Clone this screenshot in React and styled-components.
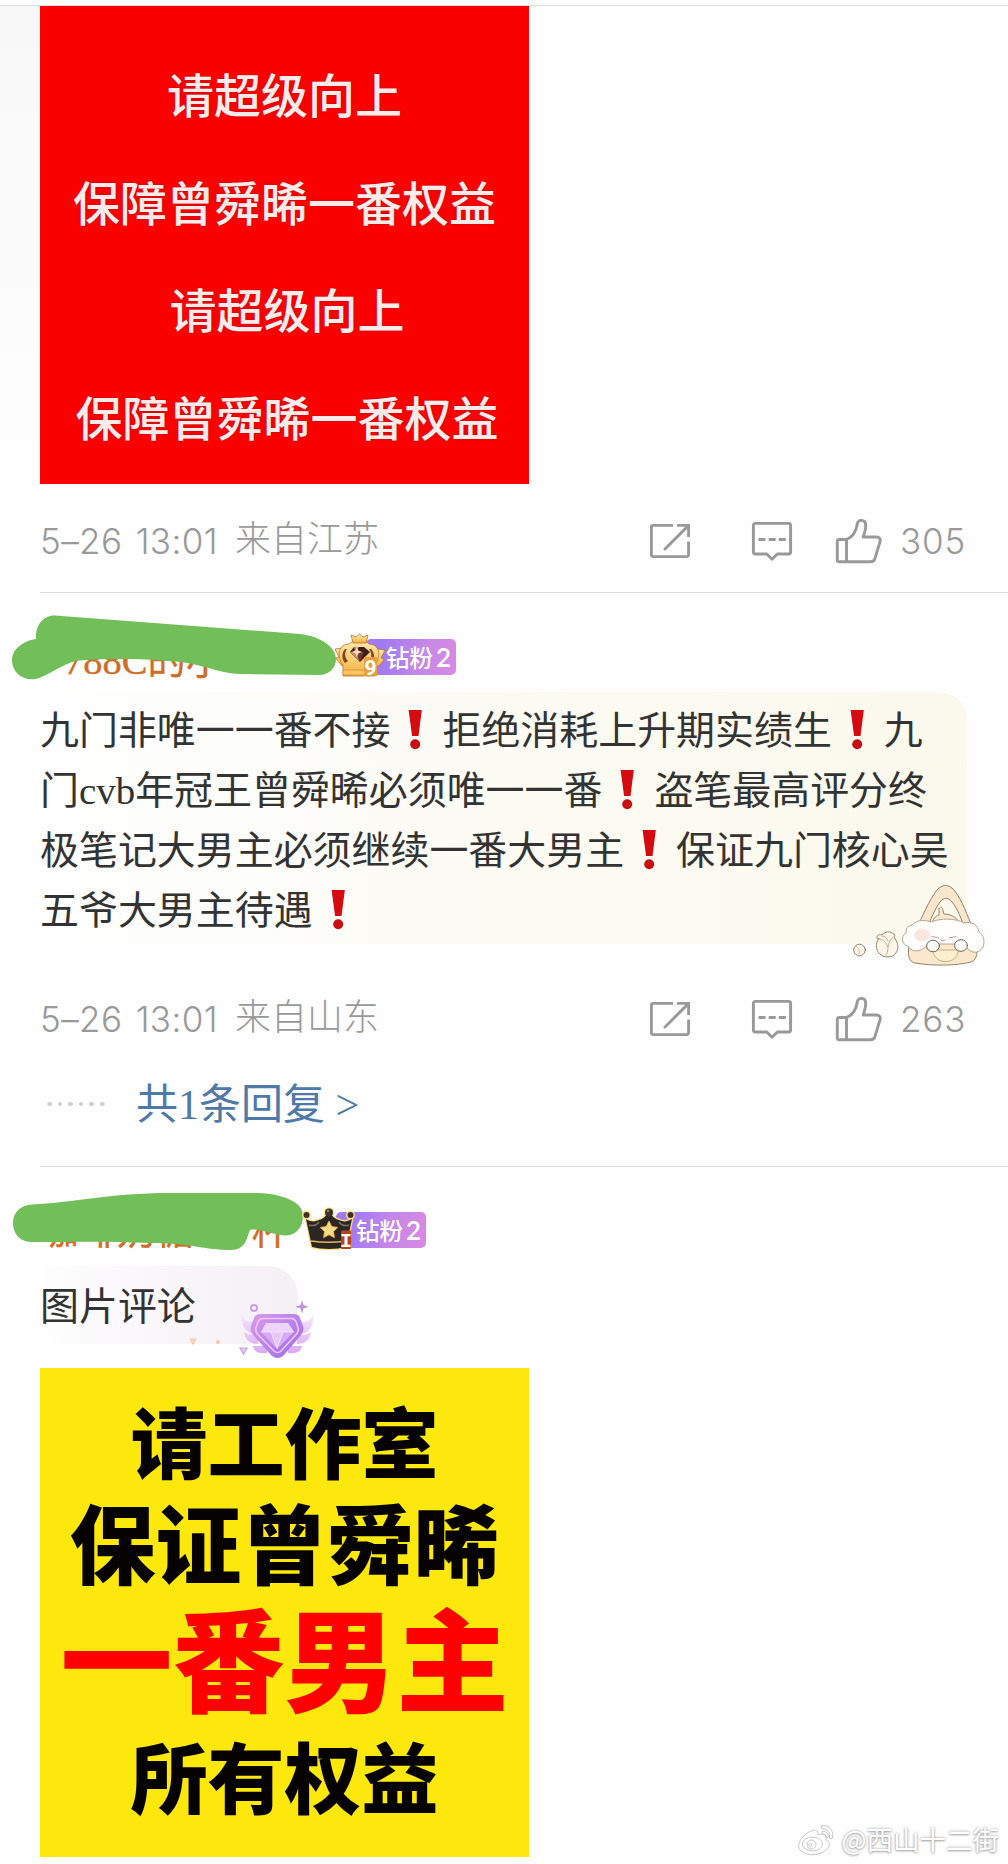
import React from "react";
import styled, { createGlobalStyle } from "styled-components";

const GlobalStyle = createGlobalStyle`
    *{
        box-sizing: border-box;
    }
    body{
        margin: 0;
        background: #fefefe;
        font-family: "Liberation Serif", "Noto Sans CJK SC", sans-serif;
        color: #333;
    }
    svg{
        display: block;
        flex: none;
    }
`

const PageStyled = styled.div`
    position: relative;
    width: 1008px;
    height: 1864px;
    overflow: hidden;
    background: linear-gradient(180deg, #f8f8f8 0, #fefefe 480px) 0 6px / 40px 480px no-repeat, #fefefe;
`

const TopEdge = styled.div`
    height: 6px;
    background: #fdfdfd;
    border-bottom: 1px solid #dedede;
`

const Comment = styled.div`
    display: flex;
    flex-direction: column;
    align-items: flex-start;
    margin-left: 40px;
    padding-top: ${(p) => p.$top || 0}px;
    padding-bottom: ${(p) => p.$bottom || 0}px;
    border-bottom: ${(p) => (p.$last ? "none" : "1px solid #dcdcdc")};
`

const RedPoster = styled.div`
    width: 489px;
    height: 478px;
    padding-top: 33px;
    background: #fb0000;
    color: #ffeaea;
    font-family: "Noto Sans CJK SC", sans-serif;
    font-weight: 500;
    font-size: 47px;
    line-height: 107.5px;
    text-align: center;
    p{
        margin: 0;
        text-shadow: 0 0 2px #8d2020;
    }
    p:nth-child(n + 3){
        padding-left: 5px;
    }
`

const YellowPoster = styled.div`
    width: 489px;
    height: 489px;
    margin-top: 24px;
    padding-top: 20px;
    background: #fce80c;
    font-family: "Noto Sans CJK SC", sans-serif;
    font-weight: 900;
`

const PosterLine = styled.p`
    margin: 0;
    height: ${(p) => p.$height}px;
    line-height: ${(p) => p.$height}px;
    font-size: ${(p) => p.$size}px;
    color: ${(p) => p.$color || "#050200"};
    text-align: center;
    white-space: nowrap;
`

const MetaStyled = styled.div`
    display: flex;
    align-items: center;
    width: 100%;
    height: 60px;
    margin-top: ${(p) => p.$top}px;
    padding-right: 42px;
    color: #999;
    .date{
        width: 195px;
        font-family: "Inter", sans-serif;
        font-weight: 300;
        font-size: 35px;
        letter-spacing: 0.4px;
        word-spacing: 3px;
        white-space: nowrap;
    }
    .place{
        flex: 1;
        font-family: "Noto Sans CJK SC", sans-serif;
        font-weight: 300;
        font-size: 36px;
        line-height: 60px;
        margin-top: -10px;
    }
    .count{
        width: 66px;
        margin-left: 18px;
        font-family: "Inter", sans-serif;
        font-weight: 300;
        font-size: 35px;
        letter-spacing: 0.8px;
        white-space: nowrap;
    }
`

const Actions = styled.div`
    display: flex;
    align-items: center;
    svg + svg{
        margin-left: 60px;
    }
    svg:nth-child(3){
        margin-left: 42px;
    }
`

const NameRow = styled.div`
    position: relative;
    display: flex;
    align-items: center;
    height: 40px;
`

const UserName = styled.div`
    width: ${(p) => p.$width}px;
    height: 40px;
    padding-left: ${(p) => p.$indent || 0}px;
    line-height: ${(p) => p.$line || 50}px;
    font-size: 38.5px;
    color: #cf6c26;
    white-space: nowrap;
    -webkit-text-stroke: 0.4px #cf6c26;
`

/* marker stroke lying over the user name */
const Marker = styled.svg`
    position: absolute;
    left: -40px;
    top: -32px;
`

const Badge = styled.div`
    position: relative;
    display: flex;
    align-items: center;
    justify-content: flex-end;
    width: 90px;
    height: 36px;
    padding-right: 5px;
    border-radius: 5px;
    background: linear-gradient(100deg, #a27af2 20%, #c587e8 60%, #d98ae2);
    color: #fff;
    font-family: "Noto Sans CJK SC", sans-serif;
    font-weight: 500;
    font-size: 23.5px;
    line-height: 34px;
    white-space: nowrap;
    span{
        margin-left: 3px;
        font-family: "Lato", sans-serif;
        font-weight: 600;
        font-size: 26px;
    }
`

const Emblem = styled.div`
    position: absolute;
    left: ${(p) => p.$left}px;
    top: ${(p) => p.$y}px;
`

const Bubble = styled.div`
    position: relative;
    width: ${(p) => p.$width}px;
    height: ${(p) => p.$height}px;
    margin-top: ${(p) => p.$top}px;
    padding-top: ${(p) => p.$pad}px;
    border-radius: ${(p) => p.$radius};
    background: ${(p) => p.$fill};
    font-size: 38.95px;
    line-height: 60px;
    p{
        margin: 0;
        height: 60px;
        white-space: nowrap;
    }
`

const Sticker = styled.div`
    position: absolute;
    left: ${(p) => p.$left}px;
    top: ${(p) => p.$y}px;
`

const MarkSvg = styled.svg`
    && {
        display: inline-block;
        vertical-align: -6px;
    }
`

const ReplyRow = styled.div`
    display: flex;
    align-items: center;
    height: 50px;
    margin-top: 30px;
    font-size: 42px;
    line-height: 50px;
    color: #4f79a8;
    white-space: nowrap;
    span{
        padding-top: 2px;
    }
`

const Dots = styled.div`
    display: flex;
    gap: 6px;
    width: 96px;
    padding-left: 7px;
    i{
        width: 4.6px;
        height: 4.6px;
        border-radius: 50%;
        background: #cfcfcf;
    }
`

const Watermark = styled.div`
    position: absolute;
    right: 9px;
    bottom: 6px;
    display: flex;
    align-items: center;
    gap: 6px;
    height: 38px;
    color: #fff;
    font-family: "Noto Sans CJK SC", sans-serif;
    font-size: 26.5px;
    line-height: 38px;
    text-shadow: 0 0 3px #9c9c9c, 0 1px 2px #b5b5b5;
`

const Mark = () => (
  <MarkSvg width="52" height="40" viewBox="0 0 52 40">
    <path d="M18.6 0h13.200l-3.300 26h-6.400z" fill="#d40b10" />
    <circle cx="25.2" cy="34.2" r="5" fill="#c90f14" />
  </MarkSvg>
)

const ShareIcon = () => (
  <svg width="42" height="36" viewBox="0 0 42 36" fill="none" stroke="#999" strokeWidth="2.9" strokeLinecap="butt">
    <path d="M24 2.4H4.2a1.8 1.8 0 0 0-1.8 1.8v27.6a1.8 1.8 0 0 0 1.8 1.8h33.6a1.8 1.8 0 0 0 1.8-1.8V18.5" />
    <path d="M28 2.4h11.6V14" />
    <path d="M38.6 3.4L16 26" strokeLinecap="round" />
  </svg>
)

const CommentIcon = () => (
  <svg width="42" height="40" viewBox="0 0 42 40" fill="none" stroke="#999" strokeWidth="2.9" strokeLinejoin="round">
    <path d="M4.4 2.4h33.2a2 2 0 0 1 2 2V31a2 2 0 0 1-2 2H26.4l-5.4 5.2-5.2-5.2H4.4a2 2 0 0 1-2-2V4.4a2 2 0 0 1 2-2z" />
    <path d="M7.5 18.500h7M17.700 18.500h7M27.800 18.500h7" strokeLinecap="butt" />
  </svg>
)

const LikeIcon = () => (
  <svg width="47" height="46" viewBox="0 0 47 46" fill="none" stroke="#999" strokeWidth="2.9" strokeLinejoin="round">
    <path d="M11.5 21.500H4.300a2 2 0 0 0-2 2v18.200a2 2 0 0 0 2 2h31.400c2 0 3.400-.8 4.100-2.800l5.200-17c.8-2.900-.6-4.900-3.400-4.900H28.200c1.600-4.600 2.500-7.800 2.500-11.600 0-3.200-1.900-5-4.400-5-2.400 0-3.800 1.500-4.200 4.300-1 6.800-5 12.500-10.600 14.800z" />
    <path d="M11.500 21.500v22" />
  </svg>
)

const GoldCrown = () => (
  <svg width="52" height="46" viewBox="0 0 52 46">
    <defs>
      <linearGradient id="gold" x1="0" y1="0" x2="0" y2="1">
        <stop offset="0" stopColor="#ffe9b0" />
        <stop offset="0.55" stopColor="#fbcd72" />
        <stop offset="1" stopColor="#f5ae3c" />
      </linearGradient>
    </defs>
    <g stroke="#b5762f" strokeWidth="0.8" strokeLinejoin="round" fill="url(#gold)">
      <path d="M1 16l8-1 3 16-4 2c-2-3-5-5-6-8l3-1z" />
      <path d="M51 17l-8-1-4 15 4 3c3-2 6-5 7-8l-3-1z" />
      <path d="M9 43V32C2 22 5 11 15 11c3-3 6-4 10-4s7 1 10 4c10 0 13 11 6 21v11z" />
      <path d="M17 2l5 2 3.500-3 3.500 3 5-2-2 8h-13z" />
    </g>
    <path d="M11 16c-4 5-3 10 0 14l3-2c-3-3-4-8-1-12zM37 16c4 4 4 10 1 14l-3-2c3-3 3-8 0-12z" fill="#8f4119" />
    <path d="M16 19l4-5h10l6 5-10 10z" fill="#3b1d1a" />
    <path d="M16 19l6 0 4 10zM20 14l5 0-4 5z" fill="#c98062" />
    <path d="M22 19h8l-4 9z" fill="#6d3830" />
    <path d="M23 13.500l1.200 4 4 1.500-4 1.500-1.200 4-1.500-4-4-1.500 4-1.500z" fill="#ffd9b8" />
    <path d="M9 37h26v5H9z" fill="#ffc560" stroke="#d08a30" strokeWidth="0.700" />
    <rect x="30" y="24" width="13" height="19" fill="#e8a03e" />
    <text x="36.500" y="42" textAnchor="middle" fontFamily="Roboto" fontWeight="700" fontSize="21" fill="#fff">9</text>
  </svg>
)

const BlackCrown = () => (
  <svg width="54" height="46" viewBox="0 0 54 46">
    <g stroke="#ffdf7e" strokeWidth="2.600" strokeLinejoin="round" fill="#29231f">
      <path d="M4 12c4 3 9 3 13 1 4-1 7-4 10-8 3 4 6 7 10 8 4 2 8 2 13-1l-6 28c-9 2.500-25 2.500-34 0z" />
      <circle cx="4.500" cy="8" r="3.200" />
      <circle cx="27" cy="5.500" r="4" />
      <circle cx="48.500" cy="8" r="3.200" />
    </g>
    <path d="M4 12c4 3 9 3 13 1 4-1 7-4 10-8 3 4 6 7 10 8 4 2 8 2 13-1l-6 28c-9 2.500-25 2.500-34 0z" fill="#2c2622" />
    <path d="M17 15c-3 4-7 4-10 3M37 15c3 4 7 4 10 3" stroke="#77706b" strokeWidth="1.500" fill="none" />
    <path d="M9 34c11 1.500 24 1.500 35 0" stroke="#e6b45b" strokeWidth="1.600" fill="none" />
    <circle cx="4.500" cy="8" r="3" fill="#3c302a" />
    <circle cx="27" cy="5.500" r="4" fill="#3c302a" />
    <circle cx="48.500" cy="8" r="3" fill="#3c302a" />
    <circle cx="26" cy="4" r="1.300" fill="#8d857d" />
    <path d="M27 14l2.800 5.500 6 .9-4.300 4.200 1 6.100-5.500-2.900-5.500 2.900 1-6.100-4.300-4.200 6-.9z" fill="#ffdb83" stroke="#e9a94a" strokeWidth="0.800" />
    <rect x="39" y="23.500" width="10" height="18.500" rx="1" fill="#b5441f" />
    <text x="44" y="39.500" textAnchor="middle" fontFamily="Liberation Mono" fontWeight="700" fontSize="20" fill="#fff">I</text>
  </svg>
)

const BasketPup = () => (
  <svg width="150" height="84" viewBox="0 0 150 84" fill="none" stroke="#97836f" strokeWidth="1" strokeLinecap="round" strokeLinejoin="round">
    <circle cx="19.500" cy="68" r="5.800" fill="#fdf6ea" />
    <path d="M16 64c3 2 4 5 3 8" stroke="#cdb79c" />
    <path d="M37 56c-1-3 3-4 5-3 3-4 8-4 12-1 1 2 0 3 1 5 6 7 2 18-7 18-11 0-15-12-9-18z" fill="#fdf6ea" />
    <path d="M38 57c5 0 8 3 10 8 1-6 4-10 7-11M48 65c0 4-1 7-2 9M42 54c3 0 5 2 6 5" stroke="#c6ae90" />
    <path d="M76 47C82 36 89 18 97 8c5-6 12-6 17 0 9 11 13 26 19 38l-7 3c-5-12-8-22-14-29-4-5-8-5-12 0-5 7-9 17-14 28z" fill="#fae6cc" stroke="#8f8068" />
    <path d="M92 42c1-5 3-8 7-9l0-6c1-3 4-2 4 2l1 3c8 0 15 5 16 11z" fill="#fbe9d0" />
    <path d="M70 61c-4 12 0 20 5 20 18 3 40 3 56-1 6-2 8-11 4-20z" fill="#fbe7cc" />
    <path d="M72 43c5-6 14-5 19-3 10-4 24-4 33 1 8-2 14 2 15 9 5 3 6 10 4 15-3 6-10 7-15 2-4-4-6-5-9-5H91c-3 0-4 2-7 4-7 5-13 3-16-2-7-1-7-11-2-13 0-4 1-7 6-8z" fill="#fffefd" stroke="#b3a598" />
    <path d="M93 68h25c1 15-25 16-25 0z" fill="#fcf0cf" stroke="#c8ae86" />
    <ellipse cx="82" cy="53" rx="8" ry="6.500" fill="#fbe6df" stroke="none" />
    <path d="M92 54.500l7 1.500M109 56l7-1.500M101 58l2 1 2-1" stroke="#bd9f97" />
    <ellipse cx="93" cy="64" rx="6.400" ry="5.800" fill="#fff" stroke="#6d6056" />
    <ellipse cx="121" cy="63.500" rx="6.400" ry="5.800" fill="#fff" stroke="#6d6056" />
  </svg>
)

const WingedDiamond = () => (
  <svg width="130" height="64" viewBox="0 0 130 64">
    <defs>
      <linearGradient id="wing" x1="0" y1="0" x2="0" y2="1">
        <stop offset="0" stopColor="#f5e3fb" />
        <stop offset="1" stopColor="#dba9f3" />
      </linearGradient>
      <linearGradient id="gem" x1="0" y1="0" x2="1" y2="1">
        <stop offset="0" stopColor="#d99bea" />
        <stop offset="1" stopColor="#9a6bea" />
      </linearGradient>
    </defs>
    <g fill="url(#wing)">
      <path d="M58 19c2 5 8 6 14 6v12c-9 0-15-7-14-18zM60 35c3 3 9 3 14 3v9c-8 0-13-4-14-12zM69 49h14v7c-8 1-13-1-14-7z" />
      <path d="M129 19c-2 5-8 6-14 6v12c9 0 15-7 14-18zM127 35c-3 3-9 3-14 3v9c8 0 13-4 14-12zM118 49h-14v7c8 1 13-1 14-7z" />
    </g>
    <path d="M76 17h34c3 0 5 1 6 4l3 8c1 4 0 6-2 9L100 58c-4 4-9 4-13 0L69 38c-2-3-3-5-2-9l3-8c1-3 3-4 6-4z" fill="url(#gem)" />
    <path d="M79 21.500h28c2 0 4 1 5 3l2 6c1 2 0 4-1 6L97 54c-2 2-5 2-7 0L73 36.500c-1-2-2-4-1-6l2-6c1-2 3-3 5-3z" fill="none" stroke="#efc6fb" strokeWidth="1.600" />
    <path d="M82 26h22l6 9-17 17-16-17z" fill="#d5adf4" />
    <path d="M82 26h22l6 9H77z" fill="#eed3fb" />
    <path d="M87 35h12l-6 17z" fill="#e6c8f9" />
    <path d="M77 35h33M87 35l6 16 6-16" stroke="#f8e9ff" strokeWidth="0.800" fill="none" />
    <circle cx="70" cy="11" r="3" fill="none" stroke="#cc9ae0" strokeWidth="1.800" />
    <path d="M118 3l1.500 5 5 1.800-5 1.700-1.500 5-1.500-5-5-1.700 5-1.800z" fill="#c292e0" />
    <path d="M56 51h7l-3.500 6z" fill="#e6cdf3" stroke="#c9a1e0" strokeWidth="1.200" />
    <path d="M6 42h6l-3 5.500z" fill="#f8d8c6" stroke="#f2c5ae" />
    <circle cx="34" cy="45" r="2" fill="#f0c6b4" />
  </svg>
)

const WeiboLogo = () => (
  <svg width="38" height="34" viewBox="0 0 38 34" fill="#fff" stroke="#c6c6c6" strokeWidth="1" strokeLinejoin="round">
    <path d="M15 9c4-2 7 0 6 4 5-2 10 0 8 5 5 2 4 7 0 10-7 6-19 6-25 1-6-6 1-17 11-20z" />
    <ellipse cx="15.500" cy="22" rx="10" ry="7" />
    <circle cx="14.500" cy="22.500" r="4.500" />
    <circle cx="13.500" cy="23.500" r="1.500" />
    <path d="M24 4c8-2 14 5 11 13l-3-1c2-5-2-10-7-9zM25 9.500c4-1 7 2 6 6l-2.500-.8c.5-2-1-3.200-3-2.700z" />
  </svg>
)

const Meta = ({ top, place, count }) => (
  <MetaStyled $top={top}>
    <div className="date">5–26 13:01</div>
    <div className="place">{place}</div>
    <Actions>
      <ShareIcon />
      <CommentIcon />
      <LikeIcon />
    </Actions>
    <div className="count">{count}</div>
  </MetaStyled>
)

const App = () => {
  const redLines = ["请超级向上", "保障曾舜晞一番权益", "请超级向上", "保障曾舜晞一番权益"]

  return (
    <PageStyled>
      <GlobalStyle />
      <TopEdge />

      <Comment $bottom={21}>
        <RedPoster>
          {redLines.map((line, i) => (
            <p key={i}>{line}</p>
          ))}
        </RedPoster>
        <Meta top={27} place="来自江苏" count={305} />
      </Comment>

      <Comment $top={44} $bottom={37}>
        <NameRow>
          <UserName $width={326} $indent={24} $line={48}>788C的小</UserName>
          <Badge>
            钻粉<span>2</span>
          </Badge>
          <Marker width="350" height="80" viewBox="0 605 350 80">
            <path
              d="M36 639C35 626 43 615 55 615.500L300 634C320 636 336 647 336 659C336 668 329 675 319 675L240 674C215 673 200 662 167 661C140 658 90 659 76 661C62 664 48 676 36 679C22 681 12 672 12 660C12 650 22 641 36 639Z"
              fill="#72be58"
            />
          </Marker>
          <Emblem $left={294} $y={-4}>
            <GoldCrown />
          </Emblem>
        </NameRow>
        <Bubble
          $width={927}
          $height={252}
          $top={15}
          $pad={9}
          $radius="0 28px 0 0"
          $fill="linear-gradient(90deg, #fefefe, #fcfbf4 50%, #fbf9ec)"
        >
          <p>九门非唯一一番不接<Mark />拒绝消耗上升期实绩生<Mark />九</p>
          <p>门cvb年冠王曾舜晞必须唯一一番<Mark />盗笔最高评分终</p>
          <p>极笔记大男主必须继续一番大男主<Mark />保证九门核心吴</p>
          <p>五爷大男主待遇<Mark /></p>
          <Sticker $left={800} $y={190}>
            <BasketPup />
          </Sticker>
        </Bubble>
        <Meta top={45} place="来自山东" count={263} />
        <ReplyRow>
          <Dots>
            <i /><i /><i /><i /><i /><i />
          </Dots>
          <span>共1条回复 &gt;</span>
        </ReplyRow>
      </Comment>

      <Comment $top={43} $last>
        <NameRow>
          <UserName $width={296} $line={42}>咖啡奶糖一&ensp;杯</UserName>
          <Badge>
            钻粉<span>2</span>
          </Badge>
          <Marker width="350" height="80" viewBox="0 1178 350 80">
            <path
              d="M32 1204.500C70 1203 110 1193 170 1193L258 1193C285 1194 303 1203 303 1215C303 1229 295 1236 284 1235.500C270 1234 262 1229 251 1229.500C247 1231 249 1250 231 1250C205 1250 190 1243 150 1243C110 1241 70 1242 32 1242C20 1242 13 1234 13 1223C13 1212 21 1205 32 1204.500Z"
              fill="#72be58"
            />
          </Marker>
          <Emblem $left={262} $y={-3}>
            <BlackCrown />
          </Emblem>
        </NameRow>
        <Bubble
          $width={258}
          $height={78}
          $top={16}
          $pad={11}
          $radius="0 30px 0 30px"
          $fill="linear-gradient(90deg, #fefefe, #f9f5f9 55%, #f5eff6)"
        >
          <p>图片评论</p>
          <Sticker $left={144} $y={31}>
            <WingedDiamond />
          </Sticker>
        </Bubble>
        <YellowPoster>
          <PosterLine $size={77} $height={104}>请工作室</PosterLine>
          <PosterLine $size={86} $height={97}>保证曾舜晞</PosterLine>
          <PosterLine $size={112} $height={133} $color="#ff0000">一番男主</PosterLine>
          <PosterLine $size={77} $height={105}>所有权益</PosterLine>
        </YellowPoster>
      </Comment>

      <Watermark>
        <WeiboLogo />
        @西山十二街
      </Watermark>
    </PageStyled>
  );
}

export default App;
